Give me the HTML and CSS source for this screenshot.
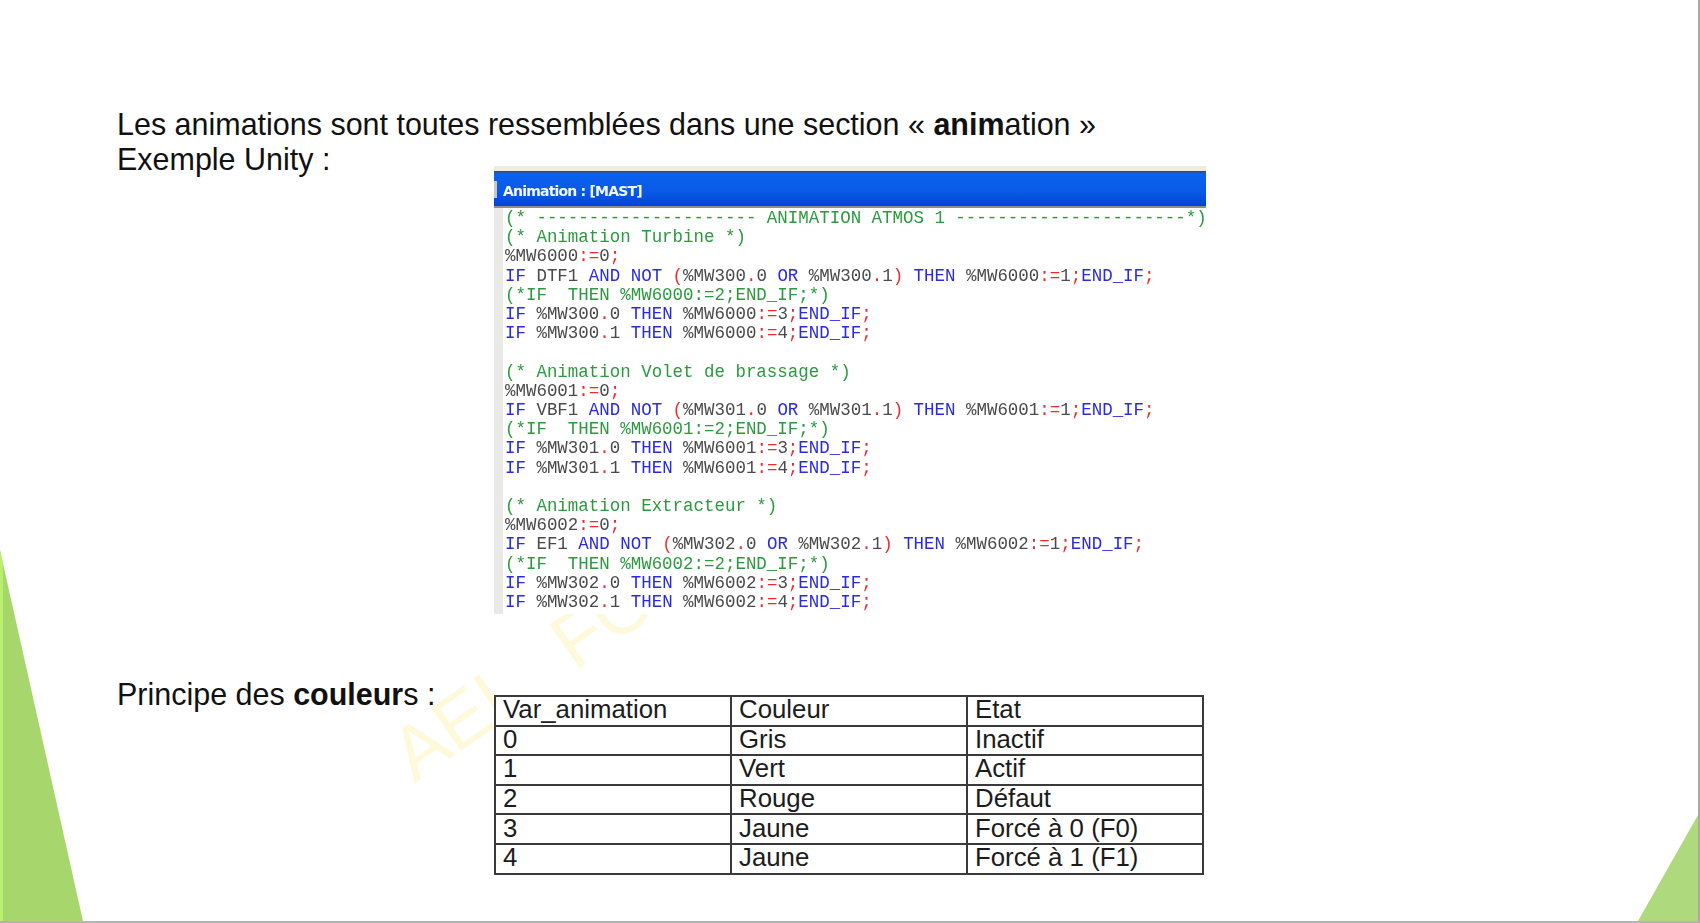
FILE: index.html
```html
<!DOCTYPE html>
<html lang="fr">
<head>
<meta charset="utf-8">
<title>Animations</title>
<link rel="stylesheet" href="styles.css">
</head>
<body>
<main class="slide">
  <svg class="deco" viewBox="0 0 1700 923" aria-hidden="true">
    <polygon class="tri" points="0,550 83,921 0,921"/>
    <polygon class="tri-light" points="0,550 3,563 3,921 0,921"/>
    <polygon class="tri-right" points="1638,921 1698,815 1698,921"/>
  </svg>
  <div class="watermark">AEI<span class="wm-gap">FOR</span></div>
  <div class="content">
    <p class="wide">Les animations sont toutes ressemblées dans une section « <b>anim</b>ation »</p>
    <p>Exemple Unity :</p>
    <div class="code-cell">
      <section class="window">
        <header class="titlebar"><span class="notch"></span>Animation : [MAST]</header>
        <pre class="code"><span class="c">(* --------------------- ANIMATION ATMOS 1 ----------------------*)</span>
<span class="c">(* Animation Turbine *)</span>
%MW6000<span class="r">:=</span>0<span class="r">;</span>
<span class="k">IF</span> DTF1 <span class="k">AND NOT</span> <span class="r">(</span>%MW300<span class="r">.</span>0 <span class="k">OR</span> %MW300<span class="r">.</span>1<span class="r">)</span> <span class="k">THEN</span> %MW6000<span class="r">:=</span>1<span class="r">;</span><span class="k">END_IF</span><span class="r">;</span>
<span class="c">(*IF  THEN %MW6000:=2;END_IF;*)</span>
<span class="k">IF</span> %MW300<span class="r">.</span>0 <span class="k">THEN</span> %MW6000<span class="r">:=</span>3<span class="r">;</span><span class="k">END_IF</span><span class="r">;</span>
<span class="k">IF</span> %MW300<span class="r">.</span>1 <span class="k">THEN</span> %MW6000<span class="r">:=</span>4<span class="r">;</span><span class="k">END_IF</span><span class="r">;</span>

<span class="c">(* Animation Volet de brassage *)</span>
%MW6001<span class="r">:=</span>0<span class="r">;</span>
<span class="k">IF</span> VBF1 <span class="k">AND NOT</span> <span class="r">(</span>%MW301<span class="r">.</span>0 <span class="k">OR</span> %MW301<span class="r">.</span>1<span class="r">)</span> <span class="k">THEN</span> %MW6001<span class="r">:=</span>1<span class="r">;</span><span class="k">END_IF</span><span class="r">;</span>
<span class="c">(*IF  THEN %MW6001:=2;END_IF;*)</span>
<span class="k">IF</span> %MW301<span class="r">.</span>0 <span class="k">THEN</span> %MW6001<span class="r">:=</span>3<span class="r">;</span><span class="k">END_IF</span><span class="r">;</span>
<span class="k">IF</span> %MW301<span class="r">.</span>1 <span class="k">THEN</span> %MW6001<span class="r">:=</span>4<span class="r">;</span><span class="k">END_IF</span><span class="r">;</span>

<span class="c">(* Animation Extracteur *)</span>
%MW6002<span class="r">:=</span>0<span class="r">;</span>
<span class="k">IF</span> EF1 <span class="k">AND NOT</span> <span class="r">(</span>%MW302<span class="r">.</span>0 <span class="k">OR</span> %MW302<span class="r">.</span>1<span class="r">)</span> <span class="k">THEN</span> %MW6002<span class="r">:=</span>1<span class="r">;</span><span class="k">END_IF</span><span class="r">;</span>
<span class="c">(*IF  THEN %MW6002:=2;END_IF;*)</span>
<span class="k">IF</span> %MW302<span class="r">.</span>0 <span class="k">THEN</span> %MW6002<span class="r">:=</span>3<span class="r">;</span><span class="k">END_IF</span><span class="r">;</span>
<span class="k">IF</span> %MW302<span class="r">.</span>1 <span class="k">THEN</span> %MW6002<span class="r">:=</span>4<span class="r">;</span><span class="k">END_IF</span><span class="r">;</span></pre>
      </section>
    </div>
    <p class="label-colors">Principe des <b>couleur</b>s :</p>
    <div class="table-cell">
      <table class="colors">
        <tr><td>Var_animation</td><td>Couleur</td><td>Etat</td></tr>
        <tr><td>0</td><td>Gris</td><td>Inactif</td></tr>
        <tr><td>1</td><td>Vert</td><td>Actif</td></tr>
        <tr><td>2</td><td>Rouge</td><td>Défaut</td></tr>
        <tr><td>3</td><td>Jaune</td><td>Forcé à 0 (F0)</td></tr>
        <tr><td>4</td><td>Jaune</td><td>Forcé à 1 (F1)</td></tr>
      </table>
    </div>
  </div>
</main>
</body>
</html>
```
FILE: styles.css
```css
html, body {
  margin: 0;
  padding: 0;
  background: #fff;
}

.slide {
  position: relative;
  width: 1700px;
  height: 923px;
  overflow: hidden;
  box-sizing: border-box;
  padding: 107px 0 0 117px;
  border-right: 2px solid #a8a8a8;
  border-bottom: 2px solid #b4b4b4;
  font-family: "Liberation Sans", Arial, sans-serif;
  color: #111;
}

.deco {
  position: absolute;
  left: 0;
  top: 0;
  width: 1700px;
  height: 923px;
}

.tri { fill: #a7d76c; }
.tri-light { fill: #b8f06e; }
.tri-right { fill: #aed97c; }

.watermark {
  position: absolute;
  left: 454px;
  top: 650px;
  transform: rotate(-35deg);
  transform-origin: 0 100%;
  font-size: 76px;
  line-height: 190px;
  color: #fff9dc;
  white-space: nowrap;
}

.wm-gap { margin-left: 73px; }

.content {
  position: relative;
  display: grid;
  grid-template-columns: 377px 712px;
  grid-template-rows: 35px auto auto;
}

.content p {
  margin: 0;
  font-size: 30.47px;
  line-height: 35px;
  white-space: nowrap;
}

.content p.wide { grid-column: 1 / 3; }

.code-cell { padding-top: 24px; }

.window {
  background: #fff;
  width: 712px;
  height: 448px;
  filter: blur(0.45px);
}

.titlebar {
  position: relative;
  box-sizing: border-box;
  height: 42px;
  padding: 12px 0 0 9px;
  border-top: 5px solid #eeeddd;
  border-bottom: 2px solid #8d8f88;
  background: linear-gradient(#3f4a5c 0, #3f4a5c 1px, #0a62ee 2px, #0a5ae6 60%, #0044d6 100%);
  color: #f4f6ff;
  font: bold 14px/17px "DejaVu Sans", sans-serif;
  letter-spacing: -0.8px;
}

.notch {
  position: absolute;
  left: 0;
  top: 10px;
  width: 3px;
  height: 17px;
  background: #c8c8c4;
}

.code {
  box-sizing: border-box;
  height: 406px;
  margin: 0;
  padding: 1px 0 0 11px;
  background: linear-gradient(90deg, #e9e9e5 9px, #fff 9px);
  font: 17.47px/19.2px "Liberation Mono", monospace;
  color: #4a4a4a;
  overflow: hidden;
}

.code .c { color: #2b9a3e; }
.code .k { color: #2a2ade; }
.code .r { color: #f02a2a; }

.label-colors { padding-top: 63px; }

.table-cell { padding-top: 81px; }

.colors {
  table-layout: fixed;
  width: 710px;
  border-collapse: collapse;
  background: #fff;
  font-size: 25.8px;
  color: #1c1c1c;
}

.colors td {
  height: 29.6px;
  box-sizing: border-box;
  padding: 0 0 3px 7px;
  border: 2px solid #3a3a3a;
  line-height: 24px;
  white-space: nowrap;
}
```
